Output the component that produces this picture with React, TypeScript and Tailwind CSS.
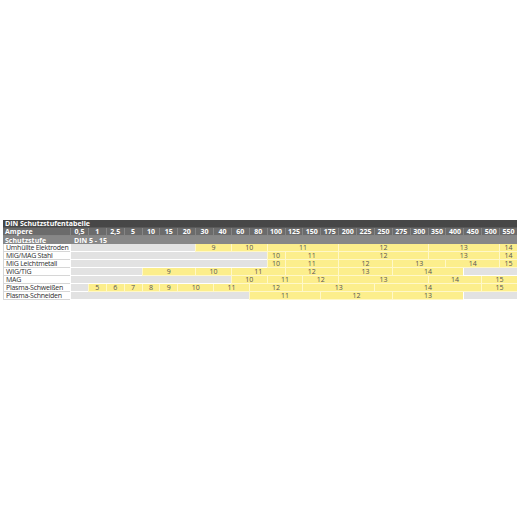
const amps = ['0,5', '1', '2,5', '5', '10', '15', '20', '30', '40', '60', '80', '100', '125', '150', '175', '200', '225', '250', '275', '300', '350', '400', '450', '500', '550'];

// [wert oder null für grau, spalten]
type Seg = [string | null, number];

const rows: { label: string; segs: Seg[] }[] = [
  { label: 'Umhüllte Elektroden', segs: [[null, 7], ['9', 2], ['10', 2], ['11', 4], ['12', 5], ['13', 4], ['14', 1]] },
  { label: 'MIG/MAG Stahl', segs: [[null, 11], ['10', 1], ['11', 3], ['12', 5], ['13', 4], ['14', 1]] },
  { label: 'MIG Leichtmetall', segs: [[null, 11], ['10', 1], ['11', 3], ['12', 3], ['13', 3], ['14', 3], ['15', 1]] },
  { label: 'WIG/TIG', segs: [[null, 4], ['9', 3], ['10', 2], ['11', 3], ['12', 3], ['13', 3], ['14', 4], [null, 3]] },
  { label: 'MAG', segs: [[null, 9], ['10', 2], ['11', 2], ['12', 2], ['13', 5], ['14', 3], ['15', 2]] },
  {
    label: 'Plasma-Schweißen',
    segs: [[null, 1], ['5', 1], ['6', 1], ['7', 1], ['8', 1], ['9', 1], ['10', 2], ['11', 2], ['12', 3], ['13', 4], ['14', 6], ['15', 2]],
  },
  { label: 'Plasma-Schneiden', segs: [[null, 10], ['11', 4], ['12', 4], ['13', 4], [null, 3]] },
];

const spanClass: Record<number, string> = {
  1: 'col-span-1',
  2: 'col-span-2',
  3: 'col-span-3',
  4: 'col-span-4',
  5: 'col-span-5',
  6: 'col-span-6',
  7: 'col-span-7',
  9: 'col-span-9',
  10: 'col-span-10',
  11: 'col-span-11',
  25: 'col-span-25',
};

const gridRow = 'grid grid-cols-[67px_repeat(25,minmax(0,1fr))] h-[8px]';

export default function App() {
  return (
    <div className="h-[520px] w-[520px] bg-white flex items-center justify-center">
      <div className="w-[514px] text-[7px] leading-[7px] font-['Open_Sans',sans-serif]">
        {/* Titel */}
        <div className="h-[8px] bg-[#474747] text-white font-bold pl-[2px] flex items-center border-b border-[#5a5a5a] whitespace-nowrap">
          DIN Schutzstufentabelle
        </div>

        {/* Ampere */}
        <div className={`${gridRow} bg-[#6b6b6b] text-white font-bold`}>
          <div className="pl-[2px] flex items-center border-b border-[#858585]">Ampere</div>
          {amps.map(a => (
            <div key={a} className="flex items-center justify-center border-l border-b border-[#858585] whitespace-nowrap">
              {a}
            </div>
          ))}
        </div>

        {/* Schutzstufe */}
        <div className={`${gridRow} bg-[#878787] text-white font-bold`}>
          <div className="pl-[2px] flex items-center">Schutzstufe</div>
          <div className="col-span-25 pl-[4px] flex items-center whitespace-nowrap">DIN 5 - 15</div>
        </div>

        {rows.map(r => (
          <div key={r.label} className={gridRow}>
            <div className="pl-[2px] flex items-center bg-white text-[#2e2e2e] border-b border-l border-[#d6d6d6] whitespace-nowrap overflow-hidden tracking-[-0.25px]">
              {r.label}
            </div>
            {r.segs.map(([v, n], i) =>
              v === null ? (
                <div key={i} className={`${spanClass[n]} bg-[#e2e2e2] border-b border-l border-white`} />
              ) : (
                <div
                  key={i}
                  className={`${spanClass[n]} bg-[#fcee8c] text-[#555] flex items-center justify-center border-b border-l border-[#fff8c8]`}
                >
                  {v}
                </div>
              ),
            )}
          </div>
        ))}
      </div>
    </div>
  );
}
